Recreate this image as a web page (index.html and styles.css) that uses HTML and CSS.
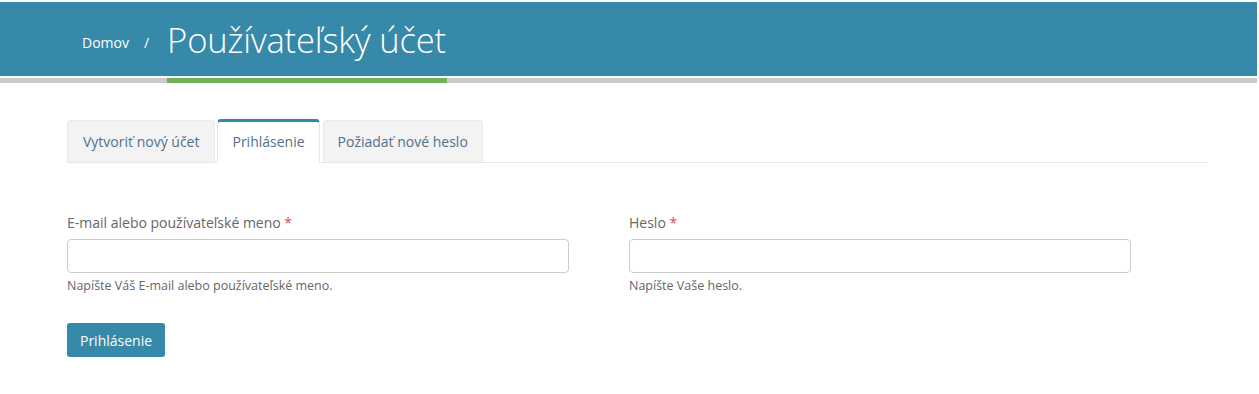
FILE: index.html
```html
<!DOCTYPE html>
<html lang="sk">
<head>
<meta charset="utf-8">
<title>Používateľský účet</title>
<link rel="stylesheet" href="styles.css">
</head>
<body>
<header class="banner">
  <div class="banner-inner">
    <nav class="crumbs"><a href="#" class="crumb">Domov</a><span class="sep">/</span></nav>
    <h1 class="title">Používateľský účet</h1>
  </div>
</header>
<div class="underbar"><div class="underbar-accent"></div></div>
<main class="content">
  <ul class="tabs">
    <li class="tab">Vytvoriť nový účet</li>
    <li class="tab tab-active">Prihlásenie</li>
    <li class="tab">Požiadať nové heslo</li>
  </ul>
  <form class="login">
    <div class="fields">
      <div class="field">
        <label class="label">E-mail alebo používateľské meno <span class="req">*</span></label>
        <input class="input" type="text">
        <div class="help">Napíšte Váš E-mail alebo používateľské meno.</div>
      </div>
      <div class="field">
        <label class="label">Heslo <span class="req">*</span></label>
        <input class="input" type="password">
        <div class="help">Napíšte Vaše heslo.</div>
      </div>
    </div>
    <button class="btn" type="button">Prihlásenie</button>
  </form>
</main>
</body>
</html>
```
FILE: styles.css
```css
html, body { margin: 0; padding: 0; background: #fff; }
body { font-family: "Open Sans", "Liberation Sans", sans-serif; color: #555; }
.banner { margin-top: 2px; width: 1257px; height: 74px; background: #3689a9; }
.banner-inner { display: flex; align-items: center; height: 100%; padding-left: 82px; }
.crumbs { display: flex; align-items: center; font-size: 14px; margin-top: 6px; }
.crumb { color: #fff; text-decoration: none; }
.sep { color: #fff; margin: 0 18px 0 15px; }
.title { margin: 0; font-size: 34.6px; font-weight: 300; color: #fff; letter-spacing: -0.2px; }
.underbar { margin-top: 2px; width: 1257px; height: 5px; background: #cbcbcb; }
.underbar-accent { margin-left: 167px; width: 280px; height: 5px; background: #71b15a; }
.content { padding-left: 67px; width: 1141px; }
.tabs { list-style: none; margin: 36px 0 0; padding: 0; display: flex; align-items: flex-end; gap: 2px; border-bottom: 1px solid #e6e6e6; height: 43px; }
.tab { height: 42px; box-sizing: border-box; padding: 11px 14px 0; font-size: 14px; color: #51718a; background: #f3f3f3; border: 1px solid #ebebeb; border-bottom: none; border-radius: 4px 4px 0 0; }
.tab:first-child { padding-left: 15px; padding-right: 15px; }
.tab-active { background: #fff; border-top: 3px solid #3689a9; padding-top: 10px; height: 44px; margin-bottom: -1px; border-color: #e6e6e6; border-top-color: #3689a9; }
.tab-active + .tab { margin-left: 1px; }
.login { padding-top: 50px; }
.fields { display: grid; grid-template-columns: 562px 562px; }
.field { display: flex; flex-direction: column; }
.label { font-size: 14px; color: #666; margin-bottom: 7px; }
.req { color: #e0484f; }
.input { width: 502px; height: 34px; box-sizing: border-box; border: 1px solid #ccc; border-radius: 4px; margin: 0; }
.help { font-size: 12.5px; line-height: 17px; color: #666; margin-top: 4px; }
.btn { margin-top: 29px; height: 34px; width: 98px; background: #3689a9; color: #fff; border: none; border-radius: 3px; font-family: inherit; font-size: 14px; padding: 0; }
```
